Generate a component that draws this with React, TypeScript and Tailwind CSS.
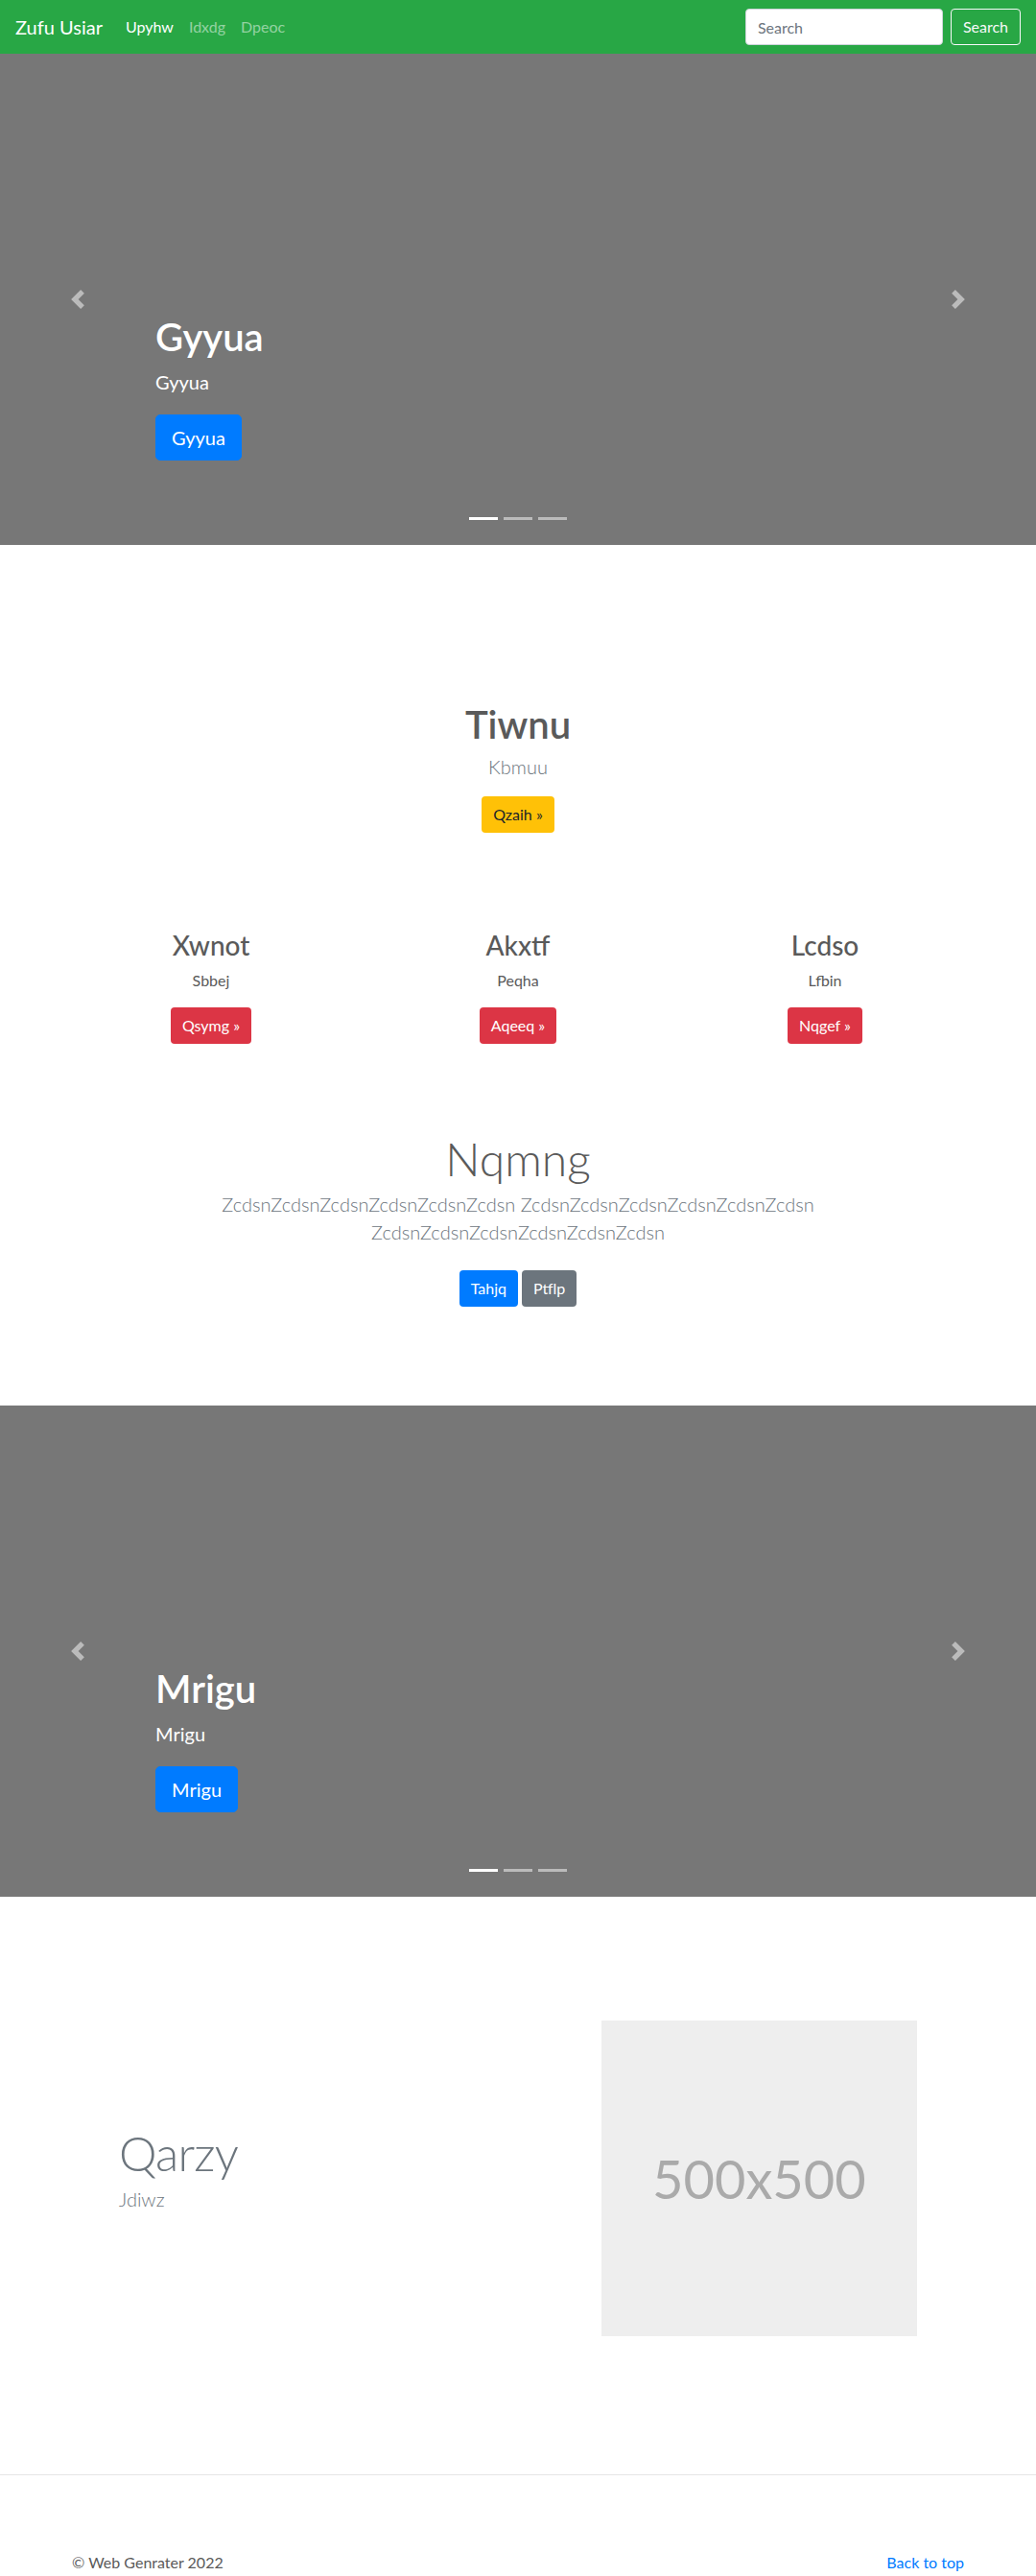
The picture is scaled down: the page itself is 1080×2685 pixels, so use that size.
import React from "react";

function ChevronLeft() {
  return (
    <svg viewBox="0 0 8 8" className="w-5 h-5" fill="#fff">
      <path d="M5.25 0l-4 4 4 4 1.5-1.5L4.25 4l2.5-2.5L5.25 0z" />
    </svg>
  );
}
function ChevronRight() {
  return (
    <svg viewBox="0 0 8 8" className="w-5 h-5" fill="#fff">
      <path d="M2.75 0l-1.5 1.5L3.75 4l-2.5 2.5L2.75 8l4-4-4-4z" />
    </svg>
  );
}

function Carousel({ label }: { label: string }) {
  return (
    <div className="relative h-[512px] bg-[#777] flex items-end px-[15%] pb-[88px]">
      <div className="text-white">
        <h1 className="text-[40px] leading-[48px] font-semibold mb-2">{label}</h1>
        <p className="text-[20px] leading-[30px] mb-[19px]">{label}</p>
        <button className="h-[48px] px-4 text-[20px] leading-[30px] bg-[#007bff] rounded-[5px] text-white border border-[#007bff]">
          {label}
        </button>
      </div>
      <div className="absolute left-0 top-0 bottom-0 w-[15%] flex items-center justify-center opacity-50">
        <ChevronLeft />
      </div>
      <div className="absolute right-0 top-0 bottom-0 w-[15%] flex items-center justify-center opacity-50">
        <ChevronRight />
      </div>
      <div className="absolute left-0 right-0 bottom-[26px] flex justify-center gap-[6px]">
        <span className="w-[30px] h-[3px] bg-white" />
        <span className="w-[30px] h-[3px] bg-white/50" />
        <span className="w-[30px] h-[3px] bg-white/50" />
      </div>
    </div>
  );
}

function Col({ title, text, btn }: { title: string; text: string; btn: string }) {
  return (
    <div className="flex flex-col items-center px-[15px]">
      <h3 className="text-[28px] leading-[34px] font-medium mb-2">{title}</h3>
      <p className="text-[16px] leading-6 mb-4">{text}</p>
      <button className="h-[38px] px-3 text-[16px] leading-6 bg-[#dc3545] text-white rounded">
        {btn}
      </button>
    </div>
  );
}

export default function App() {
  return (
    <div className="font-['Lato','Segoe_UI',sans-serif] text-[#5a5a5a] bg-white">
      {/* Navbar */}
      <nav className="h-14 bg-[#28a745] flex items-center px-4">
        <a className="text-[20px] leading-[30px] text-white mr-4">Zufu Usiar</a>
        <div className="flex text-[16px] leading-6">
          <a className="px-2 text-white">Upyhw</a>
          <a className="px-2 text-white/50">Idxdg</a>
          <a className="px-2 text-white/50">Dpeoc</a>
        </div>
        <div className="ml-auto flex items-center">
          <input
            placeholder="Search"
            className="w-[206px] h-[38px] mr-2 rounded bg-white border border-[#ced4da] px-3 text-[16px] text-[#495057] placeholder:text-[#6c757d] outline-none"
          />
          <button className="h-[38px] px-3 text-[16px] border border-[#f8f9fa] text-[#f8f9fa] rounded">
            Search
          </button>
        </div>
      </nav>

      <Carousel label="Gyyua" />

      {/* Marketing section */}
      <section className="pt-[163px] pb-[103px]">
        <div className="flex flex-col items-center text-center">
          <h1 className="text-[40px] leading-[48px] font-semibold mb-[5px]">Tiwnu</h1>
          <p className="text-[20px] leading-[30px] font-light text-[#6c757d] mb-4">Kbmuu</p>
          <button className="h-[38px] px-3 text-[16px] leading-6 bg-[#ffc107] text-[#212529] rounded">
            Qzaih »
          </button>
        </div>

        <div className="w-[960px] mx-auto grid grid-cols-3 mt-[100px] text-center">
          <Col title="Xwnot" text="Sbbej" btn="Qsymg »" />
          <Col title="Akxtf" text="Peqha" btn="Aqeeq »" />
          <Col title="Lcdso" text="Lfbin" btn="Nqgef »" />
        </div>

        <div className="flex flex-col items-center text-center mt-[91px]">
          <h1 className="text-[48px] leading-[58px] font-light">Nqmng</h1>
          <p className="w-[640px] text-[20px] leading-[29px] font-light text-[#6c757d] mt-[4px] mb-[25px]">
            ZcdsnZcdsnZcdsnZcdsnZcdsnZcdsn ZcdsnZcdsnZcdsnZcdsnZcdsnZcdsn ZcdsnZcdsnZcdsnZcdsnZcdsnZcdsn
          </p>
          <div className="flex gap-1">
            <button className="h-[38px] px-3 text-[16px] leading-6 bg-[#007bff] text-white rounded">Tahjq</button>
            <button className="h-[38px] px-3 text-[16px] leading-6 bg-[#6c757d] text-white rounded">Ptflp</button>
          </div>
        </div>
      </section>

      <Carousel label="Mrigu" />

      {/* Featurette */}
      <section className="pt-[129px] pb-[144px]">
        <div className="w-[862px] mx-auto grid grid-cols-12 items-center">
          <div className="col-span-7 px-[15px]">
            <h2 className="text-[50px] leading-[50px] font-light tracking-[-0.8px] text-[#6c757d] mb-[8px]">Qarzy</h2>
            <p className="text-[20px] leading-[30px] font-light text-[#6c757d] mb-4">Jdiwz</p>
          </div>
          <div className="col-span-5 px-[15px]">
            <div className="w-full aspect-square bg-[#eee] flex items-center justify-center">
              <span className="text-[56px] text-[#aaa]">500x500</span>
            </div>
          </div>
        </div>
      </section>

      {/* Footer */}
      <footer className="border-t border-[#e5e5e5] pt-[79px] pb-[1px]">
        <div className="w-[960px] mx-auto px-[15px] flex justify-between text-[16px] leading-6">
          <p>© Web Genrater 2022</p>
          <a className="text-[#007bff]">Back to top</a>
        </div>
      </footer>
    </div>
  );
}
